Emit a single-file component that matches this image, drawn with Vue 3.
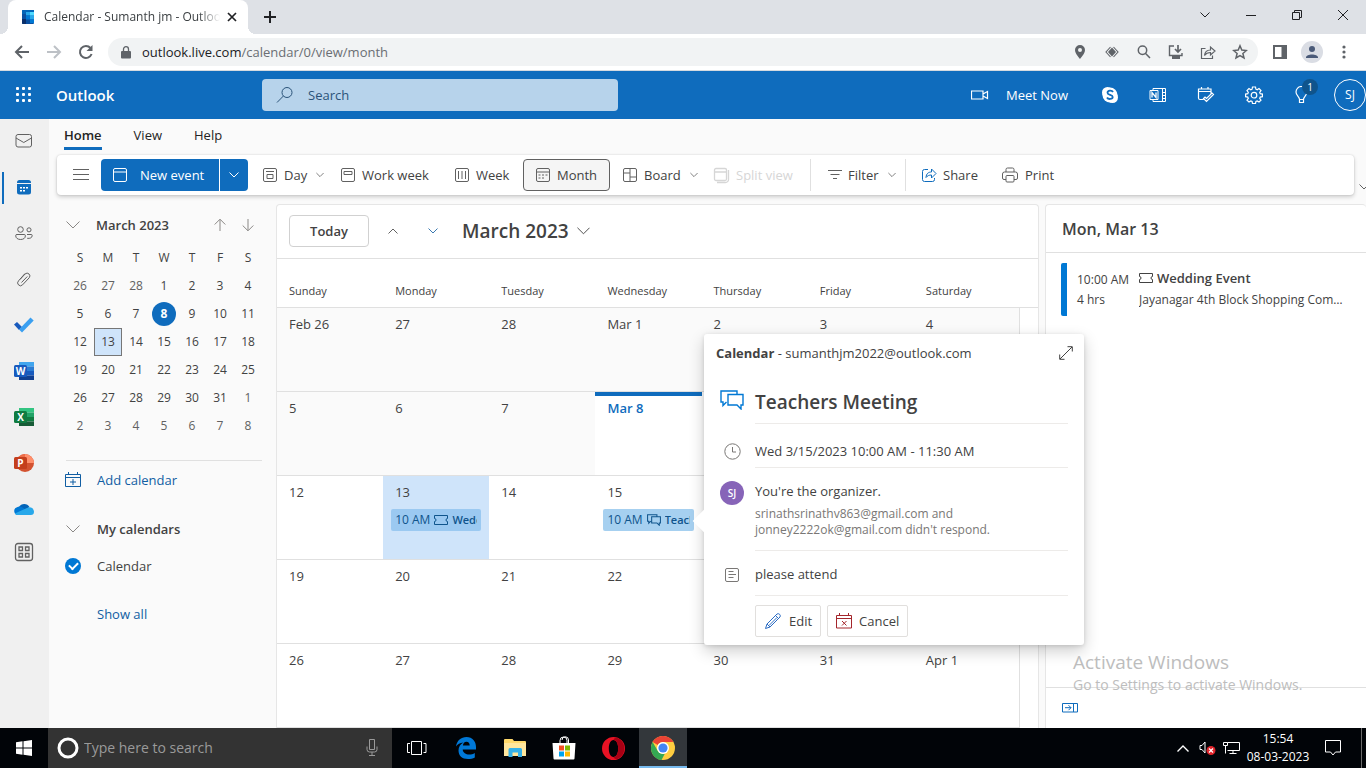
<script setup>
import { h } from 'vue'

// Line icons: [width, height, path, stroke width]
const icons = {
  back: [16, 16, 'M15 8H2M8 2L2 8l6 6', 2],
  forward: [16, 16, 'M1 8h13M8 2l6 6-6 6', 2],
  close: [10, 10, 'M1 1l8 8M9 1l-8 8', 1.7],
  plus: [12, 12, 'M6 0v12M0 6h12', 2],
  caret: [10, 6, 'M.5 .5L5 5 9.500 .5', 1],
  caretUp: [10, 6, 'M.5 5.500L5 1l4.500 4.500', 1],
  caretBig: [14, 8, 'M.5 .5L7 7 13.500 .5', 1],
  up: [12, 14, 'M6 1.500V13M.7 6.500L6 1.200l5.300 5.300', 1],
  down: [12, 14, 'M6 1v11.500M.7 7.500L6 12.800l5.300-5.300', 1],
  min: [10, 10, 'M0 5.500h10', 1],
  restore: [10, 10, 'M.5 2.500h7v7h-7zM2.500 2.500v-2h7v7h-2', 1],
  winClose: [10, 10, 'M0 0l10 10M10 0L0 10', 1],
  zoom: [14, 14, 'M5.500 1a4.200 4.200 0 1 1 0 8.400a4.200 4.200 0 0 1 0-8.400M8.600 8.500L13 13', 1.5],
  sharePage: [16, 16, 'M5.500 4.500H1.500v10h11v-3M4.500 11.500c.4-4 2.500-5.500 6-5.500V3L15 7l-4.500 4V8.500c-3 0-4.500.8-6 3z', 1.2],
  star: [16, 16, 'M8 1.800l1.800 4.300 4.600.4-3.500 3 1.100 4.500L8 11.600 4 14l1.100-4.500-3.500-3 4.600-.4z', 1.5],
  search: [18, 18, 'M11 1.500a5 5 0 1 1 0 10a5 5 0 0 1 0-10M7.400 10L1 16.500', 1],
  camera: [18, 10, 'M.5 1h11.500v8H.5zM12 4l4.500-2.500v7L12 6', 1.2],
  mail: [18, 14, 'M3 .5h11.500a2 2 0 0 1 2 2v8.500a2 2 0 0 1-2 2H3a2 2 0 0 1-2-2V2.500a2 2 0 0 1 2-2zM1 4l7.750 4.500L16.500 4', 1],
  people: [18, 14, 'M5.500.7a2.800 2.800 0 1 1 0 5.600a2.800 2.800 0 0 1 0-5.600M14 1.800a2 2 0 1 1 0 4.100a2 2 0 0 1 0-4.100M2 8.500h7.200a1.200 1.200 0 0 1 1.200 1.200c0 2.400-1.900 3.800-4.800 3.800S.7 12 .7 9.700A1.200 1.200 0 0 1 2 8.500zM12 8.500h4.200a1 1 0 0 1 1 1c0 2.200-2 3.200-5 2.800', 1],
  clip: [16, 16, 'M4 8.500l5.200-5.600a2.800 2.800 0 0 1 4 3.900L6.500 13.900a2.800 2.800 0 0 1-4-4L9 2.500M5.500 11.500l5.800-6', 1],
  apps: [20, 20, 'M4 1.500h12A2.500 2.500 0 0 1 18.500 4v12a2.500 2.500 0 0 1-2.500 2.500H4A2.500 2.500 0 0 1 1.500 16V4A2.500 2.500 0 0 1 4 1.500zM5 5h3.500v3.500H5zM11.500 5H15v3.500h-3.500zM5 11.500h3.500V15H5zM11.500 11.500H15V15h-3.500z', 1.3],
  menu: [16, 12, 'M0 .5h16M0 5.500h16M0 10.500h16', 1],
  event: [16, 16, 'M3 1.500h10a1.500 1.500 0 0 1 1.500 1.500v10a1.500 1.500 0 0 1-1.500 1.500H3A1.500 1.500 0 0 1 1.500 13V3A1.500 1.500 0 0 1 3 1.500zM1.500 5h13', 1],
  day: [16, 16, 'M3 1.500h10A1.500 1.500 0 0 1 14.500 3v10a1.500 1.500 0 0 1-1.500 1.500H3A1.500 1.500 0 0 1 1.500 13V3A1.500 1.500 0 0 1 3 1.500zM4 4.500h8M5 7.500h6v4H5z', 1],
  workWeek: [16, 16, 'M3 1.500h10A1.500 1.500 0 0 1 14.500 3v10a1.500 1.500 0 0 1-1.500 1.500H3A1.500 1.500 0 0 1 1.500 13V3A1.500 1.500 0 0 1 3 1.500zM4 4.500h8v3H4z', 1],
  week: [16, 16, 'M3 1.500h10A1.500 1.500 0 0 1 14.500 3v10a1.500 1.500 0 0 1-1.500 1.500H3A1.500 1.500 0 0 1 1.500 13V3A1.500 1.500 0 0 1 3 1.500zM4.500 4v8M8 4v8M11.500 4v8', 1],
  month: [16, 16, 'M3 1.500h10A1.500 1.500 0 0 1 14.500 3v10a1.500 1.500 0 0 1-1.500 1.500H3A1.500 1.500 0 0 1 1.500 13V3A1.500 1.500 0 0 1 3 1.500zM1.500 5h13M7 8h2M10.500 8h2M3.500 11h2M7 11h2M3.500 8h2', 1],
  board: [16, 16, 'M3 1.500h10A1.500 1.500 0 0 1 14.500 3v10a1.500 1.500 0 0 1-1.500 1.500H3A1.500 1.500 0 0 1 1.500 13V3A1.500 1.500 0 0 1 3 1.500zM8 1.500v13M1.500 6H8M8 10h6.500', 1],
  split: [17, 17, 'M3 1.500h9A1.500 1.500 0 0 1 13.500 3v9a1.500 1.500 0 0 1-1.500 1.500H3A1.500 1.500 0 0 1 1.500 12V3A1.500 1.500 0 0 1 3 1.500zM1.500 5h12M15.500 3v9.500a3 3 0 0 1-3 3H4', 1.3],
  filter: [14, 12, 'M0 1.500h14M2.500 5.500h9M5 9.500h4', 1],
  share: [16, 16, 'M7 2.500H3.500a2 2 0 0 0-2 2v8a2 2 0 0 0 2 2h8a2 2 0 0 0 2-2V11M5 10.500c.3-4 2.500-5.500 5.500-5.500V2L15 6.500 10.500 11V8C8 8 6.500 8.700 5 10.500z', 1],
  print: [18, 16, 'M5 5V2.500a1.500 1.500 0 0 1 1.500-1.500h5A1.500 1.500 0 0 1 13 2.500V5M5 12.500H3A1.500 1.500 0 0 1 1.500 11V7A2 2 0 0 1 3.500 5h11a2 2 0 0 1 2 2v4a1.500 1.500 0 0 1-1.500 1.500H13M6 8.500h6a1 1 0 0 1 1 1V14a1 1 0 0 1-1 1H6a1 1 0 0 1-1-1V9.500a1 1 0 0 1 1-1z', 1],
  addCal: [16, 16, 'M.5 2.500h15v12H.5zM.5 5.500h15M3.500 0v2.500M12.500 0v2.500M8 7v6M5 10h6', 1],
  ticket: [14, 10, 'M.5.5h13v3a1.500 1.500 0 0 0 0 3v3H.5v-3a1.500 1.500 0 0 0 0-3z', 1],
  chat: [24, 20, 'M17 4V1H1v11h2v3.500L6.500 12M8 4.500h15V15h-2v4l-4-4H8z', 1.4],
  expand: [14, 14, 'M1 13L13 1M8.500.7h4.800v4.800M5.500 13.300H.7V8.500', 1],
  clock: [17, 17, 'M8.500.8a7.700 7.700 0 1 1 0 15.400a7.700 7.700 0 0 1 0-15.400M8.500 4v5H12', 1],
  note: [16, 16, 'M3 1.500h10A1.500 1.500 0 0 1 14.500 3v10a1.500 1.500 0 0 1-1.500 1.500H3A1.500 1.500 0 0 1 1.500 13V3A1.500 1.500 0 0 1 3 1.500zM4.500 4.500h5M4.500 7.500h7.500M4.500 10.500h5', 1],
  edit: [18, 18, 'M1.500 16.500L3 12 13 2a2.200 2.200 0 0 1 3 3L6 15zM3 12l3 3M11.500 3.500l3 3M5 13.500l8-8', 1],
  cancel: [16, 16, 'M.5 2.500h15v12.500H.5zM.5 5.500h15M3.500 0v2.500M12.500 0v2.500M6 8l4.500 4.500M10.500 8L6 12.500', 1],
  pane: [16, 10, 'M.5.5h15v8.500H.5zM11.500.5V9M3 4.700h6M6.500 2.200L9 4.700 6.500 7.200', 1],
  mic: [12, 18, 'M3.500.5h5v10h-5zM1 7.500v3q0 2.500 2.500 2.500h5q2.500 0 2.500-2.500v-3M6 13v3.500M3 16.500h6', 1],
  taskView: [20, 14, 'M4.500.5h10v13h-10zM3 2.500H.5v9H3M16.500 2.500h2.500v9h-2.500', 1],
  network: [17, 14, 'M4.500 1.500h12v8h-12M10 9.500v3M6.500 12.500h7M.5 1.500h4v3h-4zM2.500 4.500v8', 1],
  note2: [16, 16, 'M.5.500h15v11.500H10.500L8 15l-2.500-3H.5z', 1],
}
const Icon = ({ name }) => {
  const [w, ht, d, sw] = icons[name]
  return h('svg', { width: w, height: ht, viewBox: `0 0 ${w} ${ht}`, fill: 'none', stroke: 'currentColor', 'stroke-width': sw, 'aria-hidden': 'true' }, [h('path', { d })])
}
Icon.props = ['name']

const weekdays = ['Sunday', 'Monday', 'Tuesday', 'Wednesday', 'Thursday', 'Friday', 'Saturday']
const mini = [
  [26, 27, 28, 1, 2, 3, 4],
  [5, 6, 7, 8, 9, 10, 11],
  [12, 13, 14, 15, 16, 17, 18],
  [19, 20, 21, 22, 23, 24, 25],
  [26, 27, 28, 29, 30, 31, 1],
  [2, 3, 4, 5, 6, 7, 8],
]
const month = [
  ['Feb 26', '27', '28', 'Mar 1', '2', '3', '4'],
  ['5', '6', '7', 'Mar 8', '9', '10', '11'],
  ['12', '13', '14', '15', '16', '17', '18'],
  ['19', '20', '21', '22', '23', '24', '25'],
  ['26', '27', '28', '29', '30', '31', 'Apr 1'],
]
const events = {
  13: { icon: 'ticket', text: 'Wedding Event' },
  15: { icon: 'chat', text: 'Teachers Meeting' },
}
const cellClass = (r, c) => ({
  past: r === 0 || (r === 1 && c < 3),
  today: r === 1 && c === 3,
  selected: r === 2 && c === 1,
})
const office = [
  { n: 'Word', l: 'W', box: '#185abd', c: ['#41a5ee', '#2b7cd3', '#185abd', '#103f91'] },
  { n: 'Excel', l: 'X', box: '#107c41', c: ['#33c481', '#21a366', '#107c41', '#185c37'] },
]
</script>

<template>
  <div class="screen">
    <header class="tabstrip">
      <div class="tab">
        <svg width="12" height="14" viewBox="0 0 12 14" aria-hidden="true">
          <rect width="12" height="14" rx="1" fill="#0a4fa0" /><path d="M0 1q0-1 1-1h11v4H0z" fill="#0364b8" /><path d="M4 2h8v3.500H4z" fill="#28a8ea" /><path d="M8 2h4v3.500H8z" fill="#50d9ff" /><path d="M4 5.500h4v4H4z" fill="#0078d4" /><path d="M8 5.500h4v4H8z" fill="#28a8ea" /><path d="M8 9.500h4V13H8z" fill="#0078d4" /><path d="M0 9h4v5H1q-1 0-1-1z" fill="#0a2f6b" />
        </svg>
        <span class="tab-title">Calendar - Sumanth jm - Outlook</span>
        <button class="tab-close" aria-label="Close tab"><Icon name="close" /></button>
      </div>
      <button class="new-tab" aria-label="New tab"><Icon name="plus" /></button>
      <div class="window-controls">
        <button aria-label="Search tabs"><Icon name="caret" /></button>
        <button aria-label="Minimize"><Icon name="min" /></button>
        <button aria-label="Restore"><Icon name="restore" /></button>
        <button aria-label="Close window"><Icon name="winClose" /></button>
      </div>
    </header>

    <div class="toolbar">
      <button aria-label="Back"><Icon name="back" /></button>
      <button class="dim" aria-label="Forward"><Icon name="forward" /></button>
      <button aria-label="Reload">
        <svg width="16" height="16" viewBox="0 0 16 16" fill="none" stroke="currentColor" stroke-width="2"><path d="M13.600 10A6 6 0 1 1 12.500 4" /><path d="M14.500 1v6h-6z" fill="currentColor" stroke="none" /></svg>
      </button>
      <div class="omnibox">
        <svg width="10" height="13" viewBox="0 0 10 13" aria-hidden="true"><rect y="5" width="10" height="7.500" rx="1" fill="#5f6368" /><path d="M2.500 5V3.200a2.500 2.500 0 0 1 5 0V5" fill="none" stroke="#5f6368" stroke-width="1.300" /></svg>
        <div class="url" role="textbox" aria-label="Address"><b>outlook.live.com</b>/calendar/0/view/month</div>
        <button aria-label="Location"><svg width="12" height="14" viewBox="0 0 12 14"><path fill="currentColor" fill-rule="evenodd" d="M6 0a5 5 0 0 1 5 5c0 3.500-5 9-5 9S1 8.500 1 5a5 5 0 0 1 5-5zm0 3a2 2 0 1 0 0 4a2 2 0 0 0 0-4z" /></svg></button>
        <button aria-label="Protocol handler"><svg width="14" height="12" viewBox="0 0 14 12"><path d="M5.500 1L1 6l4.500 5M8.500 1L13 6l-4.500 5" fill="none" stroke="currentColor" stroke-width="1.100" /><path d="M7 1.500L11 6l-4 4.500L3 6z" fill="currentColor" /></svg></button>
        <button aria-label="Zoom"><Icon name="zoom" /></button>
        <button aria-label="Install"><svg width="16" height="14" viewBox="0 0 16 14" fill="none" stroke="currentColor" stroke-width="1.400"><path d="M6 1H1.500v9.500h12.500V8" /><path d="M10 0v6M7 4l3 3 3-3" stroke-width="1.700" /><path d="M4 11h8v3H4z" fill="currentColor" stroke="none" /></svg></button>
        <button aria-label="Share page"><Icon name="sharePage" /></button>
        <button aria-label="Bookmark"><Icon name="star" /></button>
      </div>
      <button aria-label="Side panel"><svg width="14" height="14" viewBox="0 0 14 14"><path fill="currentColor" fill-rule="evenodd" d="M0 0h14v14H0zm2 2v10h6.500V2z" /></svg></button>
      <button aria-label="Profile"><svg width="22" height="22" viewBox="0 0 22 22"><circle cx="11" cy="11" r="11" fill="#dadde4" /><circle cx="11" cy="8" r="3" fill="#4a5a78" /><path d="M5 16.500c0-4 12-4 12 0v.5H5z" fill="#4a5a78" /></svg></button>
      <button aria-label="Chrome menu"><svg width="4" height="14" viewBox="0 0 4 14" fill="currentColor"><circle cx="2" cy="2" r="1.600" /><circle cx="2" cy="7" r="1.600" /><circle cx="2" cy="12" r="1.600" /></svg></button>
    </div>

    <div class="suite">
      <button class="waffle" aria-label="App launcher">
        <svg width="16" height="16" viewBox="0 0 16 16" fill="currentColor"><g v-for="y in 3" :key="y"><rect v-for="x in 3" :key="x" :x="x * 6 - 6" :y="y * 6 - 6" width="3" height="3" rx="1" /></g></svg>
      </button>
      <a class="brand" href="#">Outlook</a>
      <label class="search"><Icon name="search" /><input type="text" placeholder="Search" aria-label="Search"></label>
      <div class="suite-actions">
        <button class="meet"><Icon name="camera" /><span>Meet Now</span></button>
        <button aria-label="Skype"><svg width="18" height="18" viewBox="0 0 18 18"><circle cx="6.500" cy="6.500" r="5.500" fill="#fff" /><circle cx="11.500" cy="11.500" r="5.500" fill="#fff" /><circle cx="9" cy="9" r="7.500" fill="#fff" /><path d="M12 6C11 4 6.500 4 6.500 6.800c0 2.600 5.200 1.600 5.200 4.200 0 2.400-4.600 2.700-5.700.5" fill="none" stroke="#0f6cbd" stroke-width="1.800" /></svg></button>
        <button aria-label="OneNote"><svg width="18" height="16" viewBox="0 0 18 16" fill="none" stroke="currentColor"><path d="M1 3.500h8v9H1zM4 3.500v-2h12.500v13H4v-2M13.500 1.500v13M13.500 5.500h3M13.500 8.500h3M13.500 11.500h3" /><path d="M3 10.500v-5l4 5v-5" stroke-width="1.300" /></svg></button>
        <button aria-label="My Day"><svg width="18" height="18" viewBox="0 0 18 18" fill="none" stroke="currentColor" stroke-width="1.200"><path d="M6.500 13.500H3a1.500 1.500 0 0 1-1.500-1.500V3H14v5M1.500 5.500H14M4.500 1v2M11 1v2M6.500 12.500l3 3 7-7-1.500-1.500-5.500 5.500-1.500-1.500z" /></svg></button>
        <button aria-label="Settings"><svg width="18" height="18" viewBox="0 0 18 18" fill="none" stroke="currentColor" stroke-width="1.200"><path d="M7.500 1h3l.4 2.200 1.300.6L14 2.500 16 4.600l-1.300 1.800.5 1.300 2.200.4v2.600l-2.200.4-.5 1.300L16 14.200 14 16l-1.800-1.100-1.300.6-.4 2h-3l-.4-2-1.300-.6L4 16 2 14.200l1.300-1.800-.5-1.300-2.200-.4V8.100l2.200-.4.5-1.300L2 4.600 4 2.500l1.800 1.300 1.300-.6z" /><circle cx="9" cy="9.200" r="2.800" /></svg></button>
        <button class="tips" aria-label="Tips"><svg width="14" height="18" viewBox="0 0 14 18" fill="none" stroke="currentColor" stroke-width="1.200"><path d="M4.500 13.500C4.500 10.500 1 9.500 1 6a5.500 5.500 0 0 1 11 0c0 3.500-3.500 4.500-3.500 7.500v3h-4zM4.500 13.500h4" /></svg><span class="badge">1</span></button>
        <button class="me" aria-label="Account manager">SJ</button>
      </div>
    </div>

    <div class="body">
      <nav class="rail" aria-label="Apps">
        <a href="#" aria-label="Mail"><Icon name="mail" /></a>
        <a href="#" class="on" aria-label="Calendar"><svg width="14" height="15" viewBox="0 0 14 15"><path d="M2.500 0h9A2.500 2.500 0 0 1 14 2.500V3H0v-.5A2.500 2.500 0 0 1 2.500 0zM0 4h14v8a2.500 2.500 0 0 1-2.500 2.500h-9A2.500 2.500 0 0 1 0 12z" fill="#0f6cbd" /><path d="M3 7h2v1.500H3zM6 7h2v1.500H6zM9 7h2v1.500H9zM3 10h2v1.500H3zM6 10h2v1.500H6z" fill="#fff" /></svg></a>
        <a href="#" aria-label="People"><Icon name="people" /></a>
        <a href="#" aria-label="Files"><Icon name="clip" /></a>
        <a href="#" aria-label="To Do"><svg width="20" height="16" viewBox="0 0 20 16"><path d="M0 7.500L3 5l5 5-3 3z" fill="#185abd" /><path d="M5 12.500L16.500.5 19.700 3.500 8 15.500z" fill="#3a9ff0" /></svg></a>
        <a v-for="o in office" :key="o.n" href="#" :aria-label="o.n"><svg width="20" height="20" viewBox="0 0 20 20"><rect v-for="(c, i) in o.c" :key="c" x="5" :y="1 + i * 4.500" width="15" height="4.500" :fill="c" /><rect y="4" width="13" height="12" rx="1.500" :fill="o.box" /><text x="6.500" y="13.500" text-anchor="middle" class="glyph">{{ o.l }}</text></svg></a>
        <a href="#" aria-label="PowerPoint"><svg width="20" height="20" viewBox="0 0 20 20"><circle cx="11" cy="10" r="9" fill="#d35230" /><path d="M11 1a9 9 0 0 1 9 9h-9z" fill="#ff8f6b" /><path d="M11 1a9 9 0 0 0-9 9h9z" fill="#ed6c47" /><rect y="4" width="13" height="12" rx="1.500" fill="#c43e1c" /><text x="6.500" y="13.500" text-anchor="middle" class="glyph">P</text></svg></a>
        <a href="#" aria-label="OneDrive"><svg width="20" height="14" viewBox="0 0 20 14"><path d="M5 5a6 6 0 0 1 10.500 0L11 8z" fill="#0364b8" /><path d="M4 13a4 4 0 0 1-1-7.800C5 4 7 4.500 8.500 5.500L15 9.500 6 13z" fill="#0078d4" /><path d="M4 13c-1.500 0-2.500-.5-3.200-1.500L13 6c4-2 7 .8 7 3.800A3.300 3.300 0 0 1 16.500 13z" fill="#28a8ea" /></svg></a>
        <a href="#" class="more" aria-label="More apps"><Icon name="apps" /></a>
      </nav>

      <div class="workspace">
        <nav class="tabs" aria-label="Ribbon tabs">
          <button class="current">Home</button><button>View</button><button>Help</button>
        </nav>
        <div class="ribbon-row">
          <div class="ribbon">
            <button class="menu-btn" aria-label="Toggle navigation"><Icon name="menu" /></button>
            <button class="new-event"><Icon name="event" /><span>New event</span></button>
            <button class="new-more" aria-label="More new items"><Icon name="caret" /></button>
            <button class="cmd w-day"><Icon name="day" /><span>Day</span><Icon name="caret" /></button>
            <button class="cmd w-work"><Icon name="workWeek" /><span>Work week</span></button>
            <button class="cmd w-week"><Icon name="week" /><span>Week</span></button>
            <button class="cmd active"><Icon name="month" /><span>Month</span></button>
            <button class="cmd w-board"><Icon name="board" /><span>Board</span><Icon name="caret" /></button>
            <button class="cmd w-split" disabled><Icon name="split" /><span>Split view</span></button>
            <button class="cmd w-filter"><Icon name="filter" /><span>Filter</span><Icon name="caret" /></button>
            <button class="cmd w-share"><Icon name="share" /><span>Share</span></button>
            <button class="cmd"><Icon name="print" /><span>Print</span></button>
          </div>
          <button class="ribbon-toggle" aria-label="Ribbon options"><Icon name="caret" /></button>
        </div>

        <div class="columns">
          <aside class="side">
            <div class="side-head">
              <button aria-label="Collapse"><Icon name="caretBig" /></button>
              <h2>March 2023</h2>
              <button class="step" aria-label="Previous month"><Icon name="up" /></button>
              <button class="step" aria-label="Next month"><Icon name="down" /></button>
            </div>
            <table class="mini">
              <thead><tr><th v-for="d in weekdays" :key="d" :abbr="d">{{ d[0] }}</th></tr></thead>
              <tbody>
                <tr v-for="(row, r) in mini" :key="r">
                  <td v-for="(d, c) in row" :key="c"><button :class="{ now: r === 1 && d === 8, picked: d === 13, off: (r === 0 && d > 20) || (r > 3 && d < 10) }">{{ d }}</button></td>
                </tr>
              </tbody>
            </table>
            <div class="side-list">
              <button class="link add"><Icon name="addCal" /><span>Add calendar</span></button>
              <button class="group"><Icon name="caretBig" /><span>My calendars</span></button>
              <label class="cal"><input type="checkbox" checked><span>Calendar</span></label>
              <button class="link all">Show all</button>
            </div>
          </aside>

          <main class="board">
            <div class="board-head">
              <button class="today-btn">Today</button>
              <button class="nav" aria-label="Previous"><Icon name="caretUp" /></button>
              <button class="nav next" aria-label="Next"><Icon name="caret" /></button>
              <button class="month-btn"><span>March 2023</span><Icon name="caretBig" /></button>
            </div>
            <div class="week-head-line">
              <table class="grid">
                <thead><tr><th v-for="d in weekdays" :key="d">{{ d }}</th></tr></thead>
                <tbody>
                  <tr v-for="(row, r) in month" :key="r">
                    <td v-for="(d, c) in row" :key="c" :class="cellClass(r, c)">
                      <span class="num">{{ d }}</span>
                      <button v-if="events[d]" class="event"><span>10 AM</span><Icon v-if="events[d].icon === 'ticket'" name="ticket" /><svg v-else width="14" height="12" viewBox="0 0 24 20" fill="none" stroke="currentColor" stroke-width="1.800"><path d="M17 4V1H1v11h2v3.500L6.500 12M8 4.500h15V15h-2v4l-4-4H8z" /></svg><b>{{ events[d].text }}</b></button>
                    </td>
                  </tr>
                </tbody>
              </table>
            </div>
          </main>

          <section class="agenda">
            <h2>Mon, Mar 13</h2>
            <article>
              <div class="when"><span>10:00 AM</span><span>4 hrs</span></div>
              <div class="what">
                <h3><Icon name="ticket" /><span>Wedding Event</span></h3>
                <p>Jayanagar 4th Block Shopping Complex, Bengaluru</p>
              </div>
            </article>
            <footer><button aria-label="Hide agenda"><Icon name="pane" /></button></footer>
          </section>
        </div>
      </div>
    </div>

    <div class="popup" role="dialog" aria-label="Teachers Meeting">
      <div class="beak"></div>
      <div class="pop-head"><p><b>Calendar</b> - sumanthjm2022@outlook.com</p><button aria-label="Expand"><Icon name="expand" /></button></div>
      <div class="pop-row title"><div class="lead"><Icon name="chat" /></div><h2>Teachers Meeting</h2></div>
      <div class="pop-row time"><div class="lead"><Icon name="clock" /></div><p>Wed 3/15/2023 10:00 AM - 11:30 AM</p></div>
      <div class="pop-row who"><div class="lead"><span class="coin">SJ</span></div><div><p>You're the organizer.</p><small>srinathsrinathv863@gmail.com and<br>jonney2222ok@gmail.com didn't respond.</small></div></div>
      <div class="pop-row text"><div class="lead"><Icon name="note" /></div><p>please attend</p></div>
      <div class="pop-actions"><button class="edit"><Icon name="edit" /><span>Edit</span></button><button class="cancel"><Icon name="cancel" /><span>Cancel</span></button></div>
    </div>

    <div class="watermark"><p>Activate Windows</p><span>Go to Settings to activate Windows.</span></div>

    <footer class="taskbar">
      <button class="start" aria-label="Start"><svg width="16" height="16" viewBox="0 0 16 16" fill="#fff"><path d="M0 2.200L6.500 1.300v6.200H0zM7.500 1.200L16 0v7.500H7.500zM0 8.500h6.500v6.200L0 13.800zM7.500 8.500H16V16l-8.500-1.200z" /></svg></button>
      <label class="task-search"><svg width="22" height="22" viewBox="0 0 22 22" aria-hidden="true"><circle cx="11" cy="11" r="9" fill="none" stroke="#fff" stroke-width="3" /></svg><input type="text" placeholder="Type here to search" aria-label="Type here to search"><Icon name="mic" /></label>
      <button aria-label="Task view"><Icon name="taskView" /></button>
      <button aria-label="Edge"><svg width="20" height="22" viewBox="0 0 20 22"><path d="M0 9.500C1 3.500 5 0 10.500 0 16.500 0 20 4.500 20 10v2.500H6.700c.3 3.500 3.300 5 6.300 5 2.200 0 4.200-.7 5.800-1.600v4.500C17 21.400 14.500 22 12 22 6 22 2.500 18.500 2.500 13.500c0-3.300 1.800-6.300 4.800-7.900C4 6 1.500 7.500 0 9.500zm6.900-1h6.800c0-2.500-1.200-3.800-3.300-3.800-2 0-3.200 1.600-3.500 3.800z" fill="#0078d7" fill-rule="evenodd" /></svg></button>
      <button aria-label="File Explorer"><svg width="22" height="20" viewBox="0 0 22 20"><path d="M0 2q0-1 1-1h7.500L10 3h11q1 0 1 1v14H0z" fill="#ffd96b" /><path d="M0 5h22v13H0z" fill="#ffe69c" /><path d="M4.500 19v-7.500q0-1.500 1.500-1.500h10.500q1.500 0 1.500 1.500V19h-4v-4.500H8.500V19z" fill="#35b1e8" /></svg></button>
      <button aria-label="Store"><svg width="24" height="24" viewBox="0 0 24 24"><path d="M8 7V4.500a3.500 3.500 0 0 1 7 0V7M10 4a3 3 0 0 1 6.500 0v3" fill="none" stroke="#fff" /><path d="M.5 7h23l-1 15.500q0 1-1 1h-19q-1 0-1-1z" fill="#fff" /><path d="M7 9.500h5v5H7z" fill="#f25022" /><path d="M13 9.500h5v5h-5z" fill="#7fba00" /><path d="M7 15.500h5v5H7z" fill="#00a4ef" /><path d="M13 15.500h5v5h-5z" fill="#ffb900" /></svg></button>
      <button class="wide" aria-label="Opera"><svg width="23" height="23" viewBox="0 0 23 23"><path d="M11.500 0a11.500 11.500 0 1 1 0 23a11.500 11.500 0 0 1 0-23zm0 3C8.500 3 6.800 7 6.800 11.500S8.500 20 11.500 20s4.700-4 4.700-8.500S14.500 3 11.500 3z" fill="#e81224" fill-rule="evenodd" /><path d="M15.500 1a11.500 11.500 0 0 1 0 21c-1.700.5-3.500-.3-4-2 3 0 4.700-4 4.700-8.500S14.500 3 11.500 3c.5-1.700 2.300-2.500 4-2z" fill="#a70014" /></svg></button>
      <button class="running" aria-label="Chrome"><svg width="24" height="24" viewBox="0 0 24 24"><circle cx="12" cy="12" r="12" fill="#ffcd40" /><path d="M1.600 6A12 12 0 0 1 22.400 6H12a6 6 0 0 0-5.200 3z" fill="#ea4335" /><path d="M1.600 6l5.200 9a6 6 0 0 0 7 2.700L10.500 24A12 12 0 0 1 1.600 6z" fill="#34a853" /><circle cx="12" cy="12" r="6" fill="#fff" /><circle cx="12" cy="12" r="4.600" fill="#4285f4" /></svg></button>
      <div class="tray">
        <button aria-label="Show hidden icons"><svg width="12" height="7" viewBox="0 0 12 7" fill="none" stroke="#fff" stroke-width="1.400"><path d="M.5 6.500L6 1l5.500 5.500" /></svg></button>
        <button aria-label="Volume muted"><svg width="17" height="16" viewBox="0 0 17 16"><path d="M1 5.500h2l3-3.500v11L3 9.500H1z" fill="none" stroke="#fff" /><circle cx="12" cy="10.500" r="4.500" fill="#e0242b" /><path d="M10 8.500l4 4M14 8.500l-4 4" stroke="#fff" stroke-width="1.200" /></svg></button>
        <button aria-label="Network"><Icon name="network" /></button>
        <div class="clock"><time>15:54</time><time>08-03-2023</time></div>
        <button class="action" aria-label="Notifications"><Icon name="note2" /></button>
      </div>
    </footer>
  </div>
</template>

<style>
html, body { margin: 0; overflow: hidden; }
</style>

<style scoped>
.screen { position: relative; display: flex; flex-direction: column; height: 100vh; overflow: hidden; background: #fafafa; color: #424242; font: 13px/20px "Open Sans", "Noto Sans", sans-serif; }
.screen * { box-sizing: border-box; }
button { display: flex; align-items: center; justify-content: center; padding: 0; border: 0; background: none; color: inherit; font: inherit; white-space: nowrap; }
a { color: inherit; text-decoration: none; }
input { border: 0; padding: 0; background: none; font: inherit; color: inherit; outline: 0; min-width: 0; }
h2, h3, p { margin: 0; font-size: 13px; font-weight: 400; }
svg { flex: none; display: block; }
b { font-weight: 600; }

.tabstrip { display: flex; flex: none; height: 34px; background: #dee1e6; color: #202124; }
.tab { position: relative; display: flex; align-items: center; width: 240px; margin-left: 8px; padding: 0 10px 0 14px; border-radius: 8px 8px 0 0; background: #fff; font-size: 12px; }
.tab::before, .tab::after { content: ""; position: absolute; bottom: 0; left: -8px; width: 8px; height: 8px; background: radial-gradient(circle at 0 0, transparent 8px, #fff 8px); }
.tab::after { left: 100%; background: radial-gradient(circle at 100% 0, transparent 8px, #fff 8px); }
.tab-title { flex: 1; margin-left: 10px; overflow: hidden; white-space: nowrap; color: #3c4043; -webkit-mask-image: linear-gradient(to right, #000 88%, transparent 100%); mask-image: linear-gradient(to right, #000 88%, transparent 100%); }
.tab-close { width: 12px; margin-left: 6px; }
.new-tab { width: 44px; }
.window-controls { display: flex; margin: 0 0 5px auto; }
.window-controls button { width: 46px; }

.toolbar { display: flex; flex: none; align-items: center; height: 37px; padding: 0 6px; border-bottom: 1px solid #d5dae0; background: #fff; color: #5f6368; }
.toolbar button { width: 32px; height: 28px; }
.toolbar .dim { color: #bdc1c6; }
.omnibox { display: flex; flex: 1; align-items: center; height: 28px; margin: 0 6px; padding: 0 2px 0 13px; border-radius: 14px; background: #f1f3f4; }
.url { flex: 1; margin-left: 11px; color: #6a6e73; font-size: 13px; }
.url b { font-weight: 400; color: #202124; }

.suite { display: flex; flex: none; align-items: center; height: 48px; background: #0f6cbd; color: #fff; }
.waffle { width: 48px; height: 48px; }
.brand { width: 206px; margin-left: 8px; font-size: 15px; font-weight: 600; }
.search { display: flex; align-items: center; width: 356px; height: 32px; padding-left: 14px; border-radius: 4px; background: #b7d3eb; color: #2b5379; }
.search input { flex: 1; margin-left: 14px; }
.search input::placeholder { color: #2b5379; opacity: 1; }
.suite-actions { display: flex; margin-left: auto; }
.suite-actions button { width: 48px; height: 48px; }
.suite-actions .meet { width: 115px; justify-content: flex-start; gap: 17px; font-size: 13px; }
.tips { position: relative; }
.badge { position: absolute; top: 8px; right: 8px; width: 16px; height: 16px; border-radius: 8px; background: #0f548c; font-size: 10px; line-height: 16px; text-align: center; }
.suite-actions .me { width: 32px; height: 32px; margin: 8px 0 8px 8px; border: 1px solid #fff; border-radius: 50%; font-size: 12px; }

.body { display: flex; flex: 1; min-height: 0; }
.rail { display: flex; flex: none; flex-direction: column; width: 49px; padding-right: 1px; background: #f0f0f0; color: #616161; }
.rail a { position: relative; display: flex; align-items: center; justify-content: center; height: 46px; padding-bottom: 2px; }
.rail .more { height: 38px; padding-bottom: 0; }
.rail .on::before { content: ""; position: absolute; left: 2px; top: 7px; width: 2px; height: 32px; background: #0f6cbd; }
.glyph { fill: #fff; font: 700 10px "Open Sans", sans-serif; }

.workspace { display: flex; flex: 1; flex-direction: column; min-width: 0; }
.tabs { display: flex; gap: 32px; padding: 6px 0 5px 15px; color: #242424; }
.tabs button { height: 25px; padding-bottom: 2px; border-bottom: 3px solid transparent; line-height: 20px; }
.tabs .current { border-color: #0f6cbd; font-weight: 600; }
.ribbon-row { display: flex; padding-left: 8px; height: 40px; }
.ribbon { display: flex; flex: 1; align-items: center; padding: 4px 8px; border-radius: 4px; background: #fff; box-shadow: 0 0 2px rgba(0,0,0,.14), 0 2px 4px rgba(0,0,0,.18); color: #424242; }
.ribbon button { height: 32px; }
.ribbon svg { color: #616161; }
.menu-btn { width: 32px; margin-right: 4px; }
.ribbon .new-event { width: 118px; justify-content: flex-start; padding-left: 11px; gap: 12px; border-radius: 4px 0 0 4px; background: #0f6cbd; color: #fff; }
.ribbon .new-more { width: 28px; margin: 0 6px 0 1px; border-radius: 0 4px 4px 0; background: #0f6cbd; }
.ribbon .new-event svg, .ribbon .new-more svg { color: #fff; }
.cmd { flex: none; justify-content: flex-start; padding: 0 8px; gap: 6px; }
.cmd span + svg { width: 8px; margin-left: 3px; }
.w-day { width: 78px; }
.w-work { width: 114px; }
.w-week { width: 77px; }
.ribbon .active { width: 87px; padding-left: 11px; border: 1px solid #616161; border-radius: 4px; background: #f5f5f5; }
.w-board { width: 95px; padding-left: 12px; }
.w-split { width: 106px; padding-left: 8px; color: #d6d6d6; border-right: 1px solid #e0e0e0; }
.ribbon .w-split svg { color: #d6d6d6; }
.w-filter { width: 95px; padding-left: 17px; border-right: 1px solid #e0e0e0; }
.w-share { width: 87px; padding-left: 15px; }
.ribbon .w-share svg { color: #0f6cbd; }
.ribbon-toggle { align-self: flex-end; width: 12px; height: 16px; justify-content: flex-start; padding-left: 5px; overflow: hidden; color: #616161; }

.columns { display: flex; flex: 1; min-height: 0; padding-top: 9px; }
.side { flex: none; width: 227px; padding: 8px 14px 0 17px; }
.side-head { display: flex; align-items: center; height: 26px; color: #8a8886; }
.side-head h2 { flex: 1; margin-left: 16px; color: #424242; font-weight: 600; }
.side-head .step { width: 28px; }
.mini { width: 196px; margin-top: 6px; border-collapse: collapse; table-layout: fixed; font-size: 12px; line-height: 28px; text-align: center; }
.mini th, .mini td { padding: 0; font-weight: 400; height: 28px; }
.mini button { width: 28px; height: 28px; }
.mini .off { color: #616161; }
.mini .picked { border: 1px solid #767676; background: #cfe4fa; }
.mini .now { width: 24px; height: 24px; margin: 2px; border-radius: 50%; background: #0f6cbd; color: #fff; font-weight: 700; }
.side-list { display: flex; flex-direction: column; width: 196px; margin-top: 20px; padding-top: 9px; border-top: 1px solid #e0e0e0; }
.side-list > * { display: flex; align-items: center; justify-content: flex-start; height: 20px; }
.link { color: #115ea3; }
.add svg { margin-left: -1px; }
.side-list span { margin-left: 16px; }
.side-list .group { margin-top: 29px; font-weight: 600; }
.side-list .group svg { color: #8a8886; }
.side-list .group span { margin-left: 17px; }
.cal { margin-top: 17px; }
.cal input { display: grid; place-items: center; width: 16px; height: 16px; margin: 0 0 0 -1px; border-radius: 50%; background: #0078d4; appearance: none; }
.cal input::after { content: ""; width: 7px; height: 4px; margin-top: -2px; border: solid #fff; border-width: 0 0 2px 2px; transform: rotate(-45deg); }
.side-list .all { margin-top: 28px; padding-left: 31px; }

.board { flex: 1; min-width: 0; border: 1px solid #e6e6e6; border-bottom: 0; border-radius: 4px 4px 0 0; background: #fff; }
.board-head { display: flex; align-items: center; height: 54px; padding: 0 0 2px 12px; border-bottom: 1px solid #e0e0e0; }
.today-btn { width: 80px; height: 32px; margin-right: 4px; border: 1px solid #d1d1d1; border-radius: 4px; font-weight: 600; }
.nav { width: 40px; height: 32px; color: #616161; }
.next { color: #3b79b0; }
.month-btn { gap: 8px; margin-left: 9px; font-size: 19px; font-weight: 600; line-height: 28px; }
.month-btn svg { width: 13px; }
.week-head-line { background: linear-gradient(#e0e0e0, #e0e0e0) 0 48px / 100% 1px no-repeat; padding-right: 18px; }
.grid { width: 100%; border-collapse: separate; border-spacing: 0; table-layout: fixed; }
.grid th { height: 49px; padding: 14px 0 0 12px; font-size: 11px; font-weight: 400; text-align: left; }
.grid td { height: 84px; padding: 6px 0 0; border-bottom: 1px solid #e0e0e0; vertical-align: top; }
.grid td:last-child { border-right: 1px solid #e0e0e0; }
.grid .past { background: #fafafa; }
.grid .today { padding-top: 2px; border-top: 4px solid #0f6cbd; color: #0f6cbd; font-weight: 600; }
.grid .selected { background: #cfe4fa; }
.num { display: block; padding-left: 12px; }
.event { justify-content: flex-start; width: calc(100% - 16px); height: 22px; margin: 7px 8px 0; padding: 0 4px; gap: 4px; overflow: hidden; border-radius: 2px; background: #a6d0f0; color: #0f548c; font-size: 12px; }
.event b { overflow: hidden; font-size: 11px; }
.selected .event { background: #9bc9f1; }

.agenda { display: flex; flex: none; flex-direction: column; width: 321px; margin-left: 6px; border: solid #e6e6e6; border-width: 1px 0 0 1px; border-radius: 4px 4px 0 0; background: #fff; }
.agenda > h2 { height: 48px; padding-left: 16px; border-bottom: 1px solid #e0e0e0; font-size: 16px; font-weight: 600; line-height: 48px; }
.agenda article { display: flex; height: 53px; margin: 10px 22px 0 15px; padding: 5px 0; border-left: 6px solid #0078d4; border-radius: 2px; font-size: 12px; }
.when { display: flex; flex-direction: column; flex: none; width: 72px; padding: 2px 0 0 10px; }
.what { flex: 1; min-width: 0; }
.what h3 { display: flex; align-items: center; gap: 4px; font-weight: 600; }
.what p { margin-top: 2px; overflow: hidden; font-size: 12px; text-overflow: ellipsis; white-space: nowrap; }
.agenda footer { display: flex; align-items: center; height: 41px; margin-top: auto; padding-left: 16px; border-top: 1px solid #e0e0e0; color: #0f6cbd; }

.popup { position: absolute; left: 704px; top: 334px; width: 380px; padding: 0 16px 8px; border-radius: 3px; background: #fff; box-shadow: 0 6px 16px rgba(0,0,0,.2), 0 1px 4px rgba(0,0,0,.12); }
.beak { position: absolute; left: -8px; top: 179px; width: 16px; height: 16px; background: #fff; transform: rotate(45deg); }
.pop-head { display: flex; align-items: center; justify-content: space-between; height: 38px; margin: 0 -5px 0 -4px; }
.pop-head b { font-weight: 700; }
.pop-row { display: flex; }
.pop-row > :last-child { flex: 1; border-bottom: 1px solid #edebe9; }
.lead { display: flex; justify-content: center; align-items: center; width: 24px; margin-right: 11px; color: #797775; }
.title .lead { height: 56px; color: #0078d4; }
.title h2 { font-size: 19px; font-weight: 600; line-height: 60px; }
.title, .title h2 { height: 52px; }
.time { height: 44px; }
.time .lead { height: 54px; }
.time p { line-height: 54px; height: 44px; }
.who { height: 83px; }
.who > :last-child { padding-top: 13px; }
.who .lead { height: 50px; }
.coin { width: 24px; height: 24px; border-radius: 50%; background: #8764b8; color: #fff; font-size: 10px; font-weight: 600; line-height: 24px; text-align: center; }
.who small { display: block; margin-top: 5px; color: #797775; font-size: 12px; line-height: 16px; }
.text { height: 45px; }
.text .lead { height: 48px; }
.text p { line-height: 47px; }
.pop-actions { display: flex; gap: 6px; margin: 9px 0 0 35px; }
.pop-actions button { height: 32px; padding: 0 8px; gap: 7px; border: 1px solid #e1dfdd; border-radius: 2px; }
.edit svg { color: #2b6cc4; }
.cancel svg { color: #a4262c; }

.watermark { position: absolute; right: 56px; bottom: 73px; width: 237px; color: #bdbdbd; white-space: nowrap; }
.watermark p { font-size: 19px; line-height: 26px; }
.watermark span { font-size: 14px; }

.taskbar { display: flex; flex: none; height: 40px; background: #010408; color: #fff; }
.taskbar button { width: 49px; }
.taskbar .start { width: 48px; }
.task-search { display: flex; align-items: center; width: 344px; padding: 0 14px 0 9px; background: #333; color: #9a9a9a; font-size: 14px; }
.task-search input { flex: 1; margin-left: 5px; }
.task-search input::placeholder { color: #9a9a9a; opacity: 1; }
.taskbar .wide { width: 51px; }
.taskbar .running { width: 48px; background: #33373b; box-shadow: inset 0 -2px #76b9ed; }
.tray { display: flex; margin-left: auto; align-items: stretch; }
.tray button { width: 24px; }
.clock { display: flex; flex-direction: column; justify-content: center; width: 70px; font-size: 12px; line-height: 18px; text-align: center; }
.tray .action { width: 49px; margin-right: 4px; padding-right: 9px; border-right: 1px solid #6a6a6a; }
</style>
